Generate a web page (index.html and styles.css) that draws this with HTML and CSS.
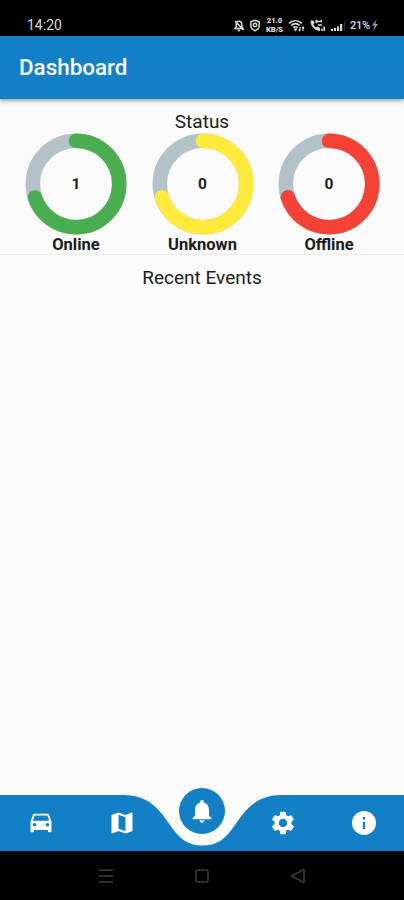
FILE: index.html
```html
<!DOCTYPE html>
<html lang="en">
<head>
    <meta charset="UTF-8">
    <meta name="viewport" content="width=device-width, initial-scale=1.0">
    <title>Dashboard</title>
    <link rel="stylesheet" href="styles.css">
</head>
<body>
    <div class="status-bar">
        <span class="clock">14:20</span>
        <div class="indicators">
            <svg width="12" height="13" viewBox="0 0 12 13" fill="none" stroke="#ddd" stroke-width="1.5">
                <path d="M2 9.5h8L8.8 8V5a2.8 2.8 0 0 0-5.6 0v3zM4.8 11.5h2.4M2 2l8.5 9"/>
            </svg>
            <svg width="12" height="13" viewBox="0 0 12 13" fill="none" stroke="#ddd" stroke-width="1.5">
                <path d="M6 1.2l4.2 1.6v3.7c0 2.4-1.7 4.2-4.2 5.2-2.5-1-4.2-2.8-4.2-5.2V2.8z"/>
                <circle cx="6" cy="6" r="1.7"/>
            </svg>
            <span class="speed"><span>21.0</span><span>KB/S</span></span>
            <svg class="wifi" width="17" height="13" viewBox="0 0 17 13" fill="none" stroke="#ddd" stroke-width="1.6">
                <path d="M1 4.3c4-3.5 9-3.5 13 0M3.2 6.5c2.7-2.3 5.9-2.3 8.6 0M5.2 8.7c1.5-1.2 3.1-1.2 4.6 0"/>
                <path d="M6.5 10h2l-1 1.5zM12 8v4M10.7 10.7l1.3 1.5M15 12V8M13.8 9.5L15 8l1.2 1.5" stroke-width="1.1"/>
            </svg>
            <svg class="call" width="17" height="13" viewBox="0 0 17 13" fill="none" stroke="#ddd">
                <path d="M2 2c0 5 3.5 8.8 8.5 9.5V9L8.3 8 7 9C5.5 8.2 4.6 7 4 5.5L5 4.5 4.4 2z" fill="#ddd"/>
                <path d="M6.5 2.5H13M6.5 2.5L8 1M6.5 2.5L8 4M9 6h4M13 2.5L11.7 1.2" stroke-width="1.4"/>
                <path d="M13 12V9.5M15.2 12V7.5" stroke-width="1.5"/>
            </svg>
            <svg class="signal" width="16" height="13" viewBox="0 0 16 13">
                <path d="M1 10h2v2H1zM4 9h2v3H4zM7 7.5h2V12H7zM10 5h2.2v7H10z" fill="#ddd"/>
                <path d="M14 2h1v10h-1z" fill="#333"/>
            </svg>
            <span class="battery">21%</span>
            <svg width="8" height="14" viewBox="0 0 8 14">
                <path d="M5.8 1L1 7.6h2.7L2 13l5-7H4.3z" fill="#999"/>
            </svg>
        </div>
    </div>

    <header class="app-bar">
        <h1>Dashboard</h1>
    </header>

    <main>
        <section class="status">
            <h2>Status</h2>
            <div class="gauges">
                <div class="gauge online">
                    <div class="ring">
                        <svg viewBox="0 0 102 102">
                            <circle class="track" cx="51" cy="51" r="43.2"/>
                            <circle class="value" cx="51" cy="51" r="43.2" pathLength="100"/>
                        </svg>
                        <span>1</span>
                    </div>
                    <p>Online</p>
                </div>
                <div class="gauge unknown">
                    <div class="ring">
                        <svg viewBox="0 0 102 102">
                            <circle class="track" cx="51" cy="51" r="43.2"/>
                            <circle class="value" cx="51" cy="51" r="43.2" pathLength="100"/>
                        </svg>
                        <span>0</span>
                    </div>
                    <p>Unknown</p>
                </div>
                <div class="gauge offline">
                    <div class="ring">
                        <svg viewBox="0 0 102 102">
                            <circle class="track" cx="51" cy="51" r="43.2"/>
                            <circle class="value" cx="51" cy="51" r="43.2" pathLength="100"/>
                        </svg>
                        <span>0</span>
                    </div>
                    <p>Offline</p>
                </div>
            </div>
        </section>
        <section class="events">
            <h2>Recent Events</h2>
        </section>
    </main>

    <nav class="bottom-nav">
        <svg class="nav-shape" viewBox="0 0 404 56">
            <path d="M0 0H123C149 0 160 15 170 30C179 43 187 50.5 202.5 50.5C218 50.5 226 43 235 30C245 15 256 0 282 0H404V56H0z"/>
        </svg>
        <a class="nav-item"><svg viewBox="0 0 24 24"><path d="M18.92 5.01C18.72 4.42 18.16 4 17.5 4h-11c-.66 0-1.21.42-1.42 1.01L3 11v8c0 .55.45 1 1 1h1c.55 0 1-.45 1-1v-1h12v1c0 .55.45 1 1 1h1c.55 0 1-.45 1-1v-8l-2.08-5.99zM6.5 15c-.83 0-1.5-.67-1.5-1.5S5.67 12 6.5 12s1.5.67 1.5 1.5S7.33 15 6.5 15zm11 0c-.83 0-1.5-.67-1.5-1.5s.67-1.5 1.5-1.5 1.5.67 1.5 1.5-.67 1.5-1.5 1.5zM5 10l1.5-4.5h11L19 10H5z"/></svg></a>
        <a class="nav-item"><svg viewBox="0 0 24 24"><path d="M20.5 3l-.16.03L15 5.1 9 3 3.36 4.9c-.21.07-.36.25-.36.48V20.5c0 .28.22.5.5.5l.16-.03L9 18.9l6 2.1 5.64-1.9c.21-.07.36-.25.36-.48V3.5c0-.28-.22-.5-.5-.5zM15 19l-6-2.11V5l6 2.11V19z"/></svg></a>
        <a class="nav-item active"><svg viewBox="0 0 24 24"><path d="M12 22c1.1 0 2-.9 2-2h-4c0 1.1.89 2 2 2zm6-6v-5c0-3.07-1.64-5.64-4.5-6.32V4c0-.83-.67-1.5-1.5-1.5s-1.5.67-1.5 1.5v.68C7.63 5.36 6 7.92 6 11v5l-2 2v1h16v-1l-2-2z"/></svg></a>
        <a class="nav-item"><svg viewBox="0 0 24 24"><path d="M19.14 12.94c.04-.3.06-.61.06-.94 0-.32-.02-.64-.07-.94l2.03-1.58c.18-.14.23-.41.12-.61l-1.92-3.32c-.12-.22-.37-.29-.59-.22l-2.39.96c-.5-.38-1.03-.7-1.62-.94l-.36-2.54c-.04-.24-.24-.41-.48-.41h-3.84c-.24 0-.43.17-.47.41l-.36 2.54c-.59.24-1.13.57-1.62.94l-2.39-.96c-.22-.08-.47 0-.59.22L2.74 8.87c-.12.21-.08.47.12.61l2.03 1.58c-.05.3-.09.63-.09.94s.02.64.07.94l-2.03 1.58c-.18.14-.23.41-.12.61l1.92 3.32c.12.22.37.29.59.22l2.39-.96c.5.38 1.03.7 1.62.94l.36 2.54c.05.24.24.41.48.41h3.84c.24 0 .44-.17.47-.41l.36-2.54c.59-.24 1.13-.56 1.62-.94l2.39.96c.22.08.47 0 .59-.22l1.92-3.32c.12-.22.07-.47-.12-.61l-2.01-1.58zM12 15.6c-1.98 0-3.6-1.62-3.6-3.6s1.62-3.6 3.6-3.6 3.6 1.62 3.6 3.6-1.62 3.6-3.6 3.6z"/></svg></a>
        <a class="nav-item"><svg viewBox="0 0 24 24"><path d="M12 0C5.4 0 0 5.4 0 12s5.4 12 12 12 12-5.4 12-12S18.6 0 12 0z"/><path class="cut" d="M10.8 10.8h2.4v7.2h-2.4zM10.8 6h2.4v2.4h-2.4z"/></svg></a>
    </nav>

    <div class="system-nav">
        <svg width="16" height="16" viewBox="0 0 16 16"><path d="M1 2.2h14M1 8h14M1 14h14"/></svg>
        <svg width="16" height="16" viewBox="0 0 16 16"><rect x="2" y="2" width="12" height="12" rx="2"/></svg>
        <svg width="16" height="16" viewBox="0 0 16 16"><path d="M14 1.5v13L1.5 8z" stroke-linejoin="round"/></svg>
    </div>
</body>
</html>
```
FILE: styles.css
```css
* {
    box-sizing: border-box;
}

body {
    margin: 0;
    height: 900px;
    display: flex;
    flex-direction: column;
    font-family: Roboto, sans-serif;
    background: #fafafa;
    color: #1c1c1c;
    overflow: hidden;
}

h1, h2, p {
    margin: 0;
}

/* phone status bar */
.status-bar {
    height: 36px;
    padding: 14px 25px 0 27px;
    display: flex;
    justify-content: space-between;
    background: #000;
    color: #ddd;
}

.clock {
    font-size: 14px;
    line-height: 22px;
}

.indicators {
    height: 22px;
    display: flex;
    align-items: center;
    gap: 4px;
}

.speed {
    display: flex;
    flex-direction: column;
    width: 19px;
    font-size: 7.5px;
    font-weight: 900;
    line-height: 9px;
    text-align: center;
}

.battery {
    width: 20px;
    margin-right: -3px;
    font-size: 11px;
    font-weight: 500;
    letter-spacing: -0.3px;
}

.app-bar {
    height: 63px;
    padding: 0 19px;
    display: flex;
    align-items: center;
    background: #1380c6;
    color: #fff;
    box-shadow: 0 2px 4px rgba(0, 0, 0, 0.35);
    z-index: 1;
}

.app-bar h1 {
    font-size: 22.4px;
    font-weight: 500;
    line-height: 27px;
}

main {
    flex: 1;
}

h2 {
    font-size: 19px;
    font-weight: 400;
    line-height: 22px;
    text-align: center;
}

.status {
    height: 156px;
    padding-top: 12px;
    border-bottom: 1px solid #eaeaea;
}

.gauges {
    display: grid;
    grid-template-columns: repeat(3, 126.5px);
    justify-content: center;
    padding-left: 1px;
}

.gauge {
    display: flex;
    flex-direction: column;
    align-items: center;
}

.ring {
    display: grid;
    place-items: center;
    width: 102px;
    height: 102px;
}

.ring svg, .ring span {
    grid-area: 1 / 1;
}

.ring span {
    font-size: 15.5px;
    font-weight: 700;
}

.ring circle {
    fill: none;
    stroke-width: 14.5;
}

.track {
    stroke: #b3c2c9;
}

.value {
    stroke-linecap: round;
    stroke-dasharray: 70 100;
    transform: rotate(-90deg);
    transform-origin: center;
}

.online .value {
    stroke: #4aae50;
}

.unknown .value {
    stroke: #ffea3c;
}

.offline .value {
    stroke: #f44236;
}

.gauge p {
    font-size: 16.5px;
    font-weight: 700;
    line-height: 19px;
}

.events {
    padding-top: 12px;
}

/* bottom bar, the curve leaves room for the active item */
.bottom-nav {
    height: 56px;
    display: grid;
    grid-template-columns: repeat(5, 1fr);
    grid-template-rows: 56px;
    place-items: center;
    padding-left: 1px;
}

.nav-shape {
    grid-area: 1 / 1 / 2 / 6;
    width: 404px;
    height: 56px;
    margin-left: -1px;
    fill: #1380c6;
}

.nav-item {
    grid-row: 1;
    display: grid;
    place-items: center;
}

.nav-item:nth-of-type(1) { grid-column: 1; }
.nav-item:nth-of-type(2) { grid-column: 2; }
.nav-item:nth-of-type(3) { grid-column: 3; }
.nav-item:nth-of-type(4) { grid-column: 4; }
.nav-item:nth-of-type(5) { grid-column: 5; }

.nav-item svg {
    width: 28px;
    height: 28px;
    fill: #fff;
}

.nav-item:last-child svg {
    width: 24px;
    height: 24px;
}

.nav-item .cut {
    fill: #1380c6;
}

.nav-item.active {
    align-self: start;
    width: 46px;
    height: 46px;
    margin-top: -7px;
    border-radius: 50%;
    background: #1380c6;
}

.system-nav {
    height: 49px;
    display: flex;
    align-items: center;
    justify-content: center;
    gap: 80px;
    background: #000;
}

.system-nav svg {
    fill: none;
    stroke: #3c3c3c;
    stroke-width: 1.5;
}
```
